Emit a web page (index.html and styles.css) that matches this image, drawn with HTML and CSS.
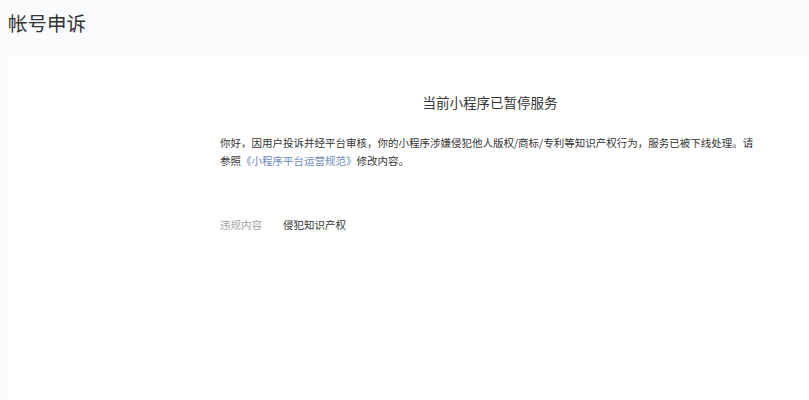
FILE: index.html
```html
<!DOCTYPE html>
<html lang="zh-CN">
<head>
<meta charset="utf-8">
<title>帐号申诉</title>
<link rel="stylesheet" href="styles.css">
</head>
<body>
<div class="page">
  <header class="page-header">帐号申诉</header>
  <main class="card">
    <div class="content">
      <h2 class="notice-title">当前小程序已暂停服务</h2>
      <p class="notice-text">你好，因用户投诉并经平台审核，你的小程序涉嫌侵犯他人版权/商标/专利等知识产权行为，服务已被下线处理。请参照<a class="link" href="#">《小程序平台运营规范》</a>修改内容。</p>
      <div class="info-row">
        <span class="info-label">违规内容</span>
        <span class="info-value">侵犯知识产权</span>
      </div>
    </div>
  </main>
</div>
</body>
</html>
```

FILE: styles.css
```css
html, body {
  margin: 0;
  padding: 0;
  height: 100%;
}
body {
  background: #f9fafb;
  font-family: "Noto Sans CJK SC", "Noto Sans", "Liberation Sans", sans-serif;
  color: #353535;
}
.page {
  display: flex;
  flex-direction: column;
  height: 100%;
}
.page-header {
  height: 57px;
  box-sizing: border-box;
  padding-left: 8px;
  line-height: 46px;
  font-size: 19.5px;
  color: #333;
  font-weight: 400;
}
.card {
  flex: 1;
  margin-left: 6px;
  background: #ffffff;
  border-left: 1px solid #f3f3f3;
  padding-top: 36px;
}
.content {
  width: 540px;
  margin-left: 213px;
}
.notice-title {
  margin: 0;
  text-align: center;
  font-size: 13.5px;
  line-height: 18px;
  font-weight: 400;
  color: #353535;
}
.notice-text {
  margin: 23px 0 0;
  font-size: 10.5px;
  line-height: 18px;
  color: #353535;
}
.link {
  color: #6b87b7;
  text-decoration: none;
}
.info-row {
  margin-top: 46px;
  display: flex;
  gap: 21px;
  font-size: 10.5px;
  line-height: 18px;
}
.info-label {
  color: #a3a3a3;
}
.info-value {
  color: #353535;
}
```
